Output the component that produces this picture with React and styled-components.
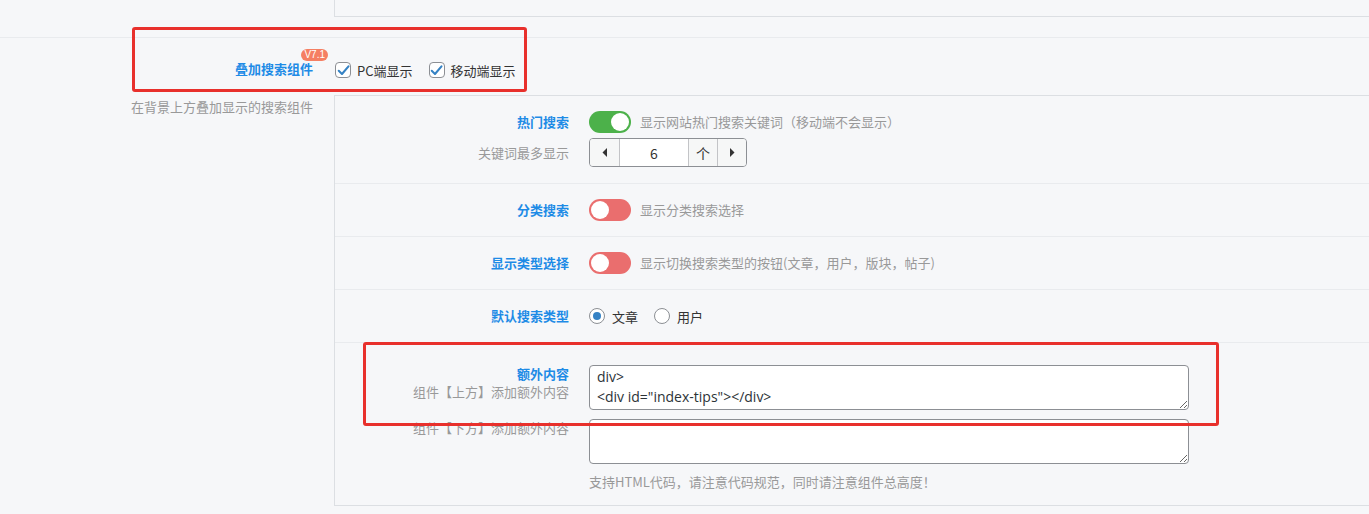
import { useEffect, useRef } from "react";
import styled, { createGlobalStyle } from "styled-components";

const GlobalStyle = createGlobalStyle`
  html, body {
    margin: 0;
    padding: 0;
    background: #f6f7f9;
  }
  * {
    box-sizing: border-box;
  }
`;

const Page = styled.div`
  position: relative;
  min-height: 514px;
  overflow: hidden;
  background: #f6f7f9;
  font-family: "Noto Sans CJK SC", "Noto Sans", sans-serif;
  font-size: 13px;
  color: #333;
`;

/* tail of the previous field group */
const TopStub = styled.div`
  height: 38px;
  padding-left: 334px;
  border-bottom: 1px solid #e9ebee;
`;

const StubPanel = styled.div`
  height: 17px;
  border-left: 1px solid #dcdfe3;
  border-bottom: 1px solid #dcdfe3;
`;

const Section = styled.div`
  display: flex;
`;

const SectionHead = styled.div`
  width: 334px;
  flex-shrink: 0;
  padding: 21px 21px 0 0;
  text-align: right;
`;

const SectionTitle = styled.span`
  position: relative;
  display: inline-block;
  line-height: 20px;
  font-weight: 700;
  color: #1e8be6;
`;

const Badge = styled.span`
  position: absolute;
  top: -10px;
  right: -15px;
  height: 12px;
  padding: 0 3px;
  border-radius: 6px;
  background: #f57f63;
  color: #fff;
  font-family: "Liberation Sans", sans-serif;
  font-size: 10px;
  font-weight: 400;
  line-height: 12px;
`;

const SectionDesc = styled.div`
  margin-top: 18px;
  line-height: 20px;
  color: #999;
`;

const SectionBody = styled.div`
  flex: 1;
  padding-top: 22px;
`;

const CheckRow = styled.div`
  display: flex;
  align-items: center;
  height: 20px;
  padding-left: 1px;
  gap: 16px;
`;

const CheckLabel = styled.label`
  display: flex;
  align-items: center;
  gap: 6px;
  color: #333;
`;

const CheckBox = styled.span`
  display: inline-flex;
  align-items: center;
  justify-content: center;
  width: 16px;
  height: 16px;
  border: 1px solid #8c8f94;
  border-radius: 4px;
  background: #fff;
`;

const Panel = styled.div`
  margin-top: 15px;
  border-top: 1px solid #dcdfe3;
  border-left: 1px solid #dcdfe3;
  border-bottom: 1px solid #dcdfe3;
`;

const Row = styled.div`
  display: flex;
  flex-direction: column;
  gap: ${(p) => p.$gap || 0}px;
  padding: ${(p) => p.$top || 15}px 0 ${(p) => p.$bottom || 15}px;
  border-bottom: ${(p) => (p.$last ? "none" : "1px solid #e9ebee")};
`;

const Line = styled.div`
  display: flex;
  align-items: ${(p) => (p.$top ? "flex-start" : "center")};
  min-height: 22px;
`;

const LabelCol = styled.div`
  width: 254px;
  flex-shrink: 0;
  padding-right: 20px;
  text-align: right;
  line-height: 18px;
`;

const FieldTitle = styled.div`
  font-weight: 700;
  color: #1e8be6;
`;

const FieldSub = styled.div`
  color: #999;
`;

const Control = styled.div`
  display: flex;
  flex-direction: column;
`;

const Inline = styled.div`
  display: flex;
  align-items: center;
  gap: 9px;
`;

const Switch = styled.span`
  position: relative;
  display: inline-block;
  width: 42px;
  height: 22px;
  border-radius: 11px;
  background: ${(p) => (p.$on ? "#4cb14a" : "#ea6e6e")};

  &::after {
    content: "";
    position: absolute;
    top: 2px;
    left: ${(p) => (p.$on ? "22px" : "2px")};
    width: 18px;
    height: 18px;
    border-radius: 50%;
    background: #fff;
  }
`;

const Hint = styled.span`
  color: #999;
  line-height: 18px;
`;

const Spinner = styled.div`
  display: flex;
  height: 29px;
  border: 1px solid #8c8f94;
  border-radius: 4px;
  overflow: hidden;
`;

const SpinBtn = styled.span`
  display: flex;
  align-items: center;
  justify-content: center;
  width: ${(p) => p.$w || 29}px;
  background: ${(p) => (p.$white ? "#fff" : "#f6f7f7")};
  border-left: ${(p) => (p.$first ? "none" : "1px solid #c3c4c7")};
  color: #333;
  font-size: 14px;
`;

const RadioGroup = styled.div`
  display: flex;
  align-items: center;
  gap: 16px;
`;

const RadioLabel = styled.label`
  display: flex;
  align-items: center;
  gap: 7px;
  color: #333;
`;

const RadioDot = styled.span`
  display: inline-flex;
  align-items: center;
  justify-content: center;
  width: 16px;
  height: 16px;
  border: 1px solid #8c8f94;
  border-radius: 50%;
  background: #fff;

  &::after {
    content: "";
    display: ${(p) => (p.$on ? "block" : "none")};
    width: 8px;
    height: 8px;
    border-radius: 50%;
    background: #3582c4;
  }
`;

const TextArea = styled.textarea`
  display: block;
  width: 600px;
  height: 45px;
  margin: 0;
  padding: 2px 7px;
  border: 1px solid #8c8f94;
  border-radius: 4px;
  background: #fff;
  color: #2c3338;
  font-family: "Open Sans", "Noto Sans", sans-serif;
  font-size: 14px;
  line-height: 20px;
  overflow: hidden;
  outline: none;
`;

const HelpText = styled.div`
  margin-top: 9px;
  line-height: 18px;
  color: #999;
`;

const Annotation = styled.div`
  position: absolute;
  border: 3px solid #e8302c;
  border-radius: 3px;
  pointer-events: none;
`;

function Check() {
  return (
    <CheckBox>
      <svg width="13" height="13" viewBox="0 0 12 12">
        <path
          d="M1.6 6.2 L4.6 9.2 L10.6 2.2"
          fill="none"
          stroke="#3582c4"
          strokeWidth="1.9"
          strokeLinecap="round"
          strokeLinejoin="round"
        />
      </svg>
    </CheckBox>
  );
}

function Arrow({ dir }) {
  return (
    <svg width="6" height="9" viewBox="0 0 6 9">
      <polygon
        points={dir === "left" ? "5,0 5,9 0.5,4.5" : "1,0 1,9 5.5,4.5"}
        fill="#333"
      />
    </svg>
  );
}

const topContent =
  '<div class="search-tips"><span>搜索热门 gyp</span> <a href="#">关键 qjy</a> <p>gyp q</p> </\ndiv>\n<div id="index-tips"></div>';

function ScrolledArea({ value }) {
  const ref = useRef(null);
  useEffect(() => {
    if (ref.current) ref.current.scrollTop = ref.current.scrollHeight;
  }, []);
  return <TextArea ref={ref} defaultValue={value} spellCheck={false} />;
}

export default function App() {
  return (
    <Page>
      <GlobalStyle />
      <TopStub>
        <StubPanel />
      </TopStub>

      <Section>
        <SectionHead>
          <SectionTitle>
            叠加搜索组件
            <Badge>V7.1</Badge>
          </SectionTitle>
          <SectionDesc>在背景上方叠加显示的搜索组件</SectionDesc>
        </SectionHead>

        <SectionBody>
          <CheckRow>
            <CheckLabel>
              <Check />
              PC端显示
            </CheckLabel>
            <CheckLabel>
              <Check />
              移动端显示
            </CheckLabel>
          </CheckRow>

          <Panel>
            <Row $gap={5} $bottom={16}>
              <Line>
                <LabelCol>
                  <FieldTitle>热门搜索</FieldTitle>
                </LabelCol>
                <Inline>
                  <Switch $on />
                  <Hint>显示网站热门搜索关键词（移动端不会显示）</Hint>
                </Inline>
              </Line>
              <Line>
                <LabelCol>
                  <FieldSub>关键词最多显示</FieldSub>
                </LabelCol>
                <Spinner>
                  <SpinBtn $first>
                    <Arrow dir="left" />
                  </SpinBtn>
                  <SpinBtn $w={69} $white>
                    6
                  </SpinBtn>
                  <SpinBtn>个</SpinBtn>
                  <SpinBtn>
                    <Arrow dir="right" />
                  </SpinBtn>
                </Spinner>
              </Line>
            </Row>

            <Row>
              <Line>
                <LabelCol>
                  <FieldTitle>分类搜索</FieldTitle>
                </LabelCol>
                <Inline>
                  <Switch />
                  <Hint>显示分类搜索选择</Hint>
                </Inline>
              </Line>
            </Row>

            <Row>
              <Line>
                <LabelCol>
                  <FieldTitle>显示类型选择</FieldTitle>
                </LabelCol>
                <Inline>
                  <Switch />
                  <Hint>显示切换搜索类型的按钮(文章，用户，版块，帖子)</Hint>
                </Inline>
              </Line>
            </Row>

            <Row>
              <Line>
                <LabelCol>
                  <FieldTitle>默认搜索类型</FieldTitle>
                </LabelCol>
                <RadioGroup>
                  <RadioLabel>
                    <RadioDot $on />
                    文章
                  </RadioLabel>
                  <RadioLabel>
                    <RadioDot />
                    用户
                  </RadioLabel>
                </RadioGroup>
              </Line>
            </Row>

            <Row $top={22} $bottom={14} $gap={9} $last>
              <Line $top>
                <LabelCol>
                  <FieldTitle>额外内容</FieldTitle>
                  <FieldSub>组件【上方】添加额外内容</FieldSub>
                </LabelCol>
                <ScrolledArea value={topContent} />
              </Line>
              <Line $top>
                <LabelCol>
                  <FieldSub>组件【下方】添加额外内容</FieldSub>
                </LabelCol>
                <Control>
                  <TextArea defaultValue="" />
                  <HelpText>支持HTML代码，请注意代码规范，同时请注意组件总高度！</HelpText>
                </Control>
              </Line>
            </Row>
          </Panel>
        </SectionBody>
      </Section>

      <Annotation style={{ left: 132, top: 27, width: 395, height: 65 }} />
      <Annotation style={{ left: 363, top: 342, width: 856, height: 84 }} />
    </Page>
  );
}
